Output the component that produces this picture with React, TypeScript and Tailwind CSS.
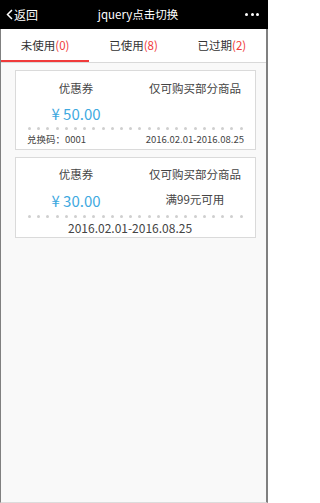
import React, { useState } from "react";

const tabs = [
  { name: "未使用", count: 0 },
  { name: "已使用", count: 8 },
  { name: "已过期", count: 2 },
];

const Dots = () => (
  <div className="flex justify-between px-[12px]">
    {Array.from({ length: 24 }).map((_, i) => (
      <span key={i} className="w-[3px] h-[3px] rounded-full bg-[#cfcfcf]" />
    ))}
  </div>
);

const App = () => {
  const [active, setActive] = useState(0);

  return (
    <div
      className="w-[268px] h-[503px] flex flex-col bg-[#f9f9f9] text-[#333] overflow-hidden"
      style={{ fontFamily: '"Noto Sans CJK SC", "Noto Sans", sans-serif' }}
    >
      {/* header */}
      <div className="h-[29px] bg-black text-white flex items-center justify-between px-[6px] shrink-0">
        <div className="flex items-center text-[12px] w-[50px]">
          <svg width="7" height="11" viewBox="0 0 7 11" className="mr-[1px]">
            <path d="M6 1L1.5 5.5L6 10" stroke="#fff" strokeWidth="1.5" fill="none" />
          </svg>
          返回
        </div>
        <div className="text-[11.5px] ml-[8px] whitespace-nowrap">jquery点击切换</div>
        <div className="flex gap-[2.5px] w-[50px] justify-end pr-[3px]">
          <span className="w-[3px] h-[3px] rounded-full bg-white" />
          <span className="w-[3px] h-[3px] rounded-full bg-white" />
          <span className="w-[3px] h-[3px] rounded-full bg-white" />
        </div>
      </div>

      <div className="flex-1 flex flex-col border-l border-l-[#808080] border-r-2 border-r-[#808080] border-b border-b-[#dcdcdc]">
        {/* tabs */}
        <div className="flex bg-white border-b border-[#d9d9d9] h-[34px] shrink-0">
          {tabs.map((t, i) => (
            <div
              key={t.name}
              onClick={() => setActive(i)}
              className={
                "flex-1 flex items-center justify-center text-[11.5px] pt-[2px] border-b-2 whitespace-nowrap " +
                (active === i ? "border-[#f03a3a]" : "border-transparent")
              }
            >
              {t.name}
              <span className="text-[#f03a3a]">({t.count})</span>
            </div>
          ))}
        </div>

        {/* coupons */}
        <div className="flex flex-col gap-[7px] pl-[14px] pr-[10px] pt-[7px]">
          <div className="bg-white border border-[#dadada] flex flex-col pt-[9px] pb-[4px]">
            <div className="flex justify-between px-[12px] text-[11.5px] leading-[16px] text-[#444]">
              <div className="w-[96px] text-center">优惠券</div>
              <div className="w-[96px] text-center whitespace-nowrap">仅可购买部分商品</div>
            </div>
            <div className="flex px-[12px] mt-[9px]">
              <div className="w-[96px] text-center text-[15px] leading-[18px] text-[#3ea9df]">¥ 50.00</div>
            </div>
            <div className="mt-[4px]">
              <Dots />
            </div>
            <div className="flex justify-between px-[11px] mt-[3px] text-[9.5px] leading-[12px] text-[#444] whitespace-nowrap">
              <span>兑换码：0001</span>
              <span>2016.02.01-2016.08.25</span>
            </div>
          </div>

          <div className="bg-white border border-[#dadada] flex flex-col pt-[8px] pb-[2px]">
            <div className="flex justify-between px-[12px] text-[11.5px] leading-[16px] text-[#444]">
              <div className="w-[96px] text-center">优惠券</div>
              <div className="w-[96px] text-center whitespace-nowrap">仅可购买部分商品</div>
            </div>
            <div className="flex justify-between items-center px-[12px] mt-[9px]">
              <div className="w-[96px] text-center text-[15px] leading-[18px] text-[#3ea9df]">¥ 30.00</div>
              <div className="w-[96px] text-center text-[11.5px] leading-[16px] text-[#444] mb-[4px] whitespace-nowrap">满99元可用</div>
            </div>
            <div className="mt-[4px]">
              <Dots />
            </div>
            <div className="pl-[52px] mt-[3px] text-[12px] leading-[14px] text-[#444] whitespace-nowrap">2016.02.01-2016.08.25</div>
          </div>
        </div>
      </div>
    </div>
  );
};

export default App;
